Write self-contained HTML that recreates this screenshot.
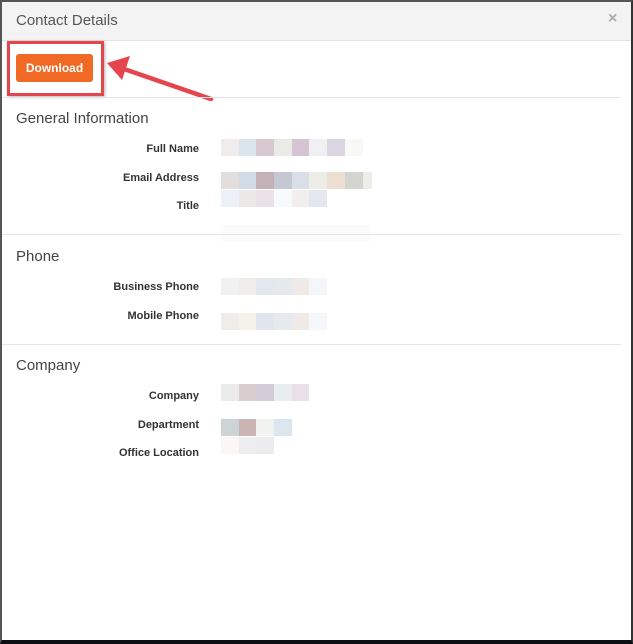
<!DOCTYPE html>
<html><head><meta charset="utf-8"><style>
*{margin:0;padding:0;box-sizing:border-box}
html,body{width:633px;height:644px;overflow:hidden;background:#fff;font-family:"Liberation Sans",Arial,sans-serif}
.frame{position:absolute;left:0;top:0;width:633px;height:644px;border-left:2px solid #555;border-top:2px solid #555;border-right:2px solid #333;border-bottom:4px solid #0b0f14;background:#fff}
.hdr{position:absolute;left:2px;top:2px;width:629px;height:39px;background:#f3f3f3;border-bottom:1px solid #e2e2e2}
.t{position:absolute;color:#555}
.hr{position:absolute;left:2px;width:619px;height:1px;background:#e5e5e5}
.h{position:absolute;left:16px;font-size:15px;color:#444}
.l{position:absolute;right:434px;font-size:11px;font-weight:bold;color:#333;text-align:right;white-space:nowrap}
.b{position:absolute;height:17px;display:flex}
.b i{display:block;width:17.7px;height:17px}
</style></head><body>
<div class="frame"></div>
<div class="hdr"></div>
<div class="t" style="left:16px;top:12px;font-size:15px;color:#555">Contact Details</div>
<div class="t" style="left:608px;top:10px;font-size:16px;color:#aaa;font-weight:bold">×</div>
<div style="position:absolute;left:7px;top:41px;width:97px;height:55px;border:3px solid #e5454c;box-shadow:1px 1px 3px rgba(0,0,0,.3)"></div>
<div style="position:absolute;left:16px;top:54px;width:77px;height:28px;background:#f06a26;border-radius:3px;color:#fff;font-size:12px;font-weight:bold;line-height:28px;text-align:center">Download</div>
<svg style="position:absolute;left:0;top:0" width="633" height="644"><line x1="211" y1="99" x2="124" y2="69" stroke="#e5454c" stroke-width="4.5" stroke-linecap="round"/><polygon points="107,63 130,56 122,80" fill="#e5454c"/></svg>
<div class="hr" style="top:97px"></div>
<div class="h" style="top:110px">General Information</div>
<div class="l" style="top:143px">Full Name</div>
<div class="b" style="left:221px;top:139px"><i style="background:#f0ecec"></i><i style="background:#dbe5ee"></i><i style="background:#d8c8d0"></i><i style="background:#ebebe6"></i><i style="background:#d6c3d3"></i><i style="background:#eef0f2"></i><i style="background:#dbd5e2"></i><i style="background:#f8f8f5"></i></div>
<div class="l" style="top:172px">Email Address</div>
<div class="b" style="left:221px;top:172px"><i style="background:#e2dedd"></i><i style="background:#d2dbe8"></i><i style="background:#c4b1b8"></i><i style="background:#c5c8d2"></i><i style="background:#d9dfe6"></i><i style="background:#edede8"></i><i style="background:#ecdfd2"></i><i style="background:#d4d5d0"></i><i style="background:#edede9;width:9px"></i></div>
<div class="l" style="top:200px">Title</div>
<div class="b" style="left:221px;top:190px"><i style="background:#ebf1f6"></i><i style="background:#ece8e8"></i><i style="background:#eae2e6"></i><i style="background:#f7fafb"></i><i style="background:#f2eeee"></i><i style="background:#e3e8ef"></i></div>
<div style="position:absolute;left:221px;top:225px;width:149px;height:17px;background:#fbfbfb"></div>
<div class="hr" style="top:234px"></div>
<div class="h" style="top:248px">Phone</div>
<div class="l" style="top:281px">Business Phone</div>
<div class="b" style="left:221px;top:278px"><i style="background:#f1f1f1"></i><i style="background:#f2eded"></i><i style="background:#e3e7ee"></i><i style="background:#e6e9ec"></i><i style="background:#efe9e7"></i><i style="background:#f4f6fa"></i></div>
<div class="l" style="top:310px">Mobile Phone</div>
<div class="b" style="left:221px;top:313px"><i style="background:#f0ecea"></i><i style="background:#f3f3ea"></i><i style="background:#e1e6ee"></i><i style="background:#e6eaef"></i><i style="background:#efeae8"></i><i style="background:#f6f7fb"></i></div>
<div class="hr" style="top:344px"></div>
<div class="h" style="top:357px">Company</div>
<div class="l" style="top:390px">Company</div>
<div class="b" style="left:221px;top:384px"><i style="background:#ebebeb"></i><i style="background:#dacdcf"></i><i style="background:#d3ccd8"></i><i style="background:#e8eeed"></i><i style="background:#e9e0e9"></i></div>
<div class="l" style="top:419px">Department</div>
<div class="b" style="left:221px;top:419px"><i style="background:#ccd5d4"></i><i style="background:#cbb5b4"></i><i style="background:#f1f3f1"></i><i style="background:#dbe6ef"></i></div>
<div class="l" style="top:447px">Office Location</div>
<div class="b" style="left:221px;top:437px"><i style="background:#fbf7f5"></i><i style="background:#ededf0"></i><i style="background:#ececee"></i></div>
</body></html>
